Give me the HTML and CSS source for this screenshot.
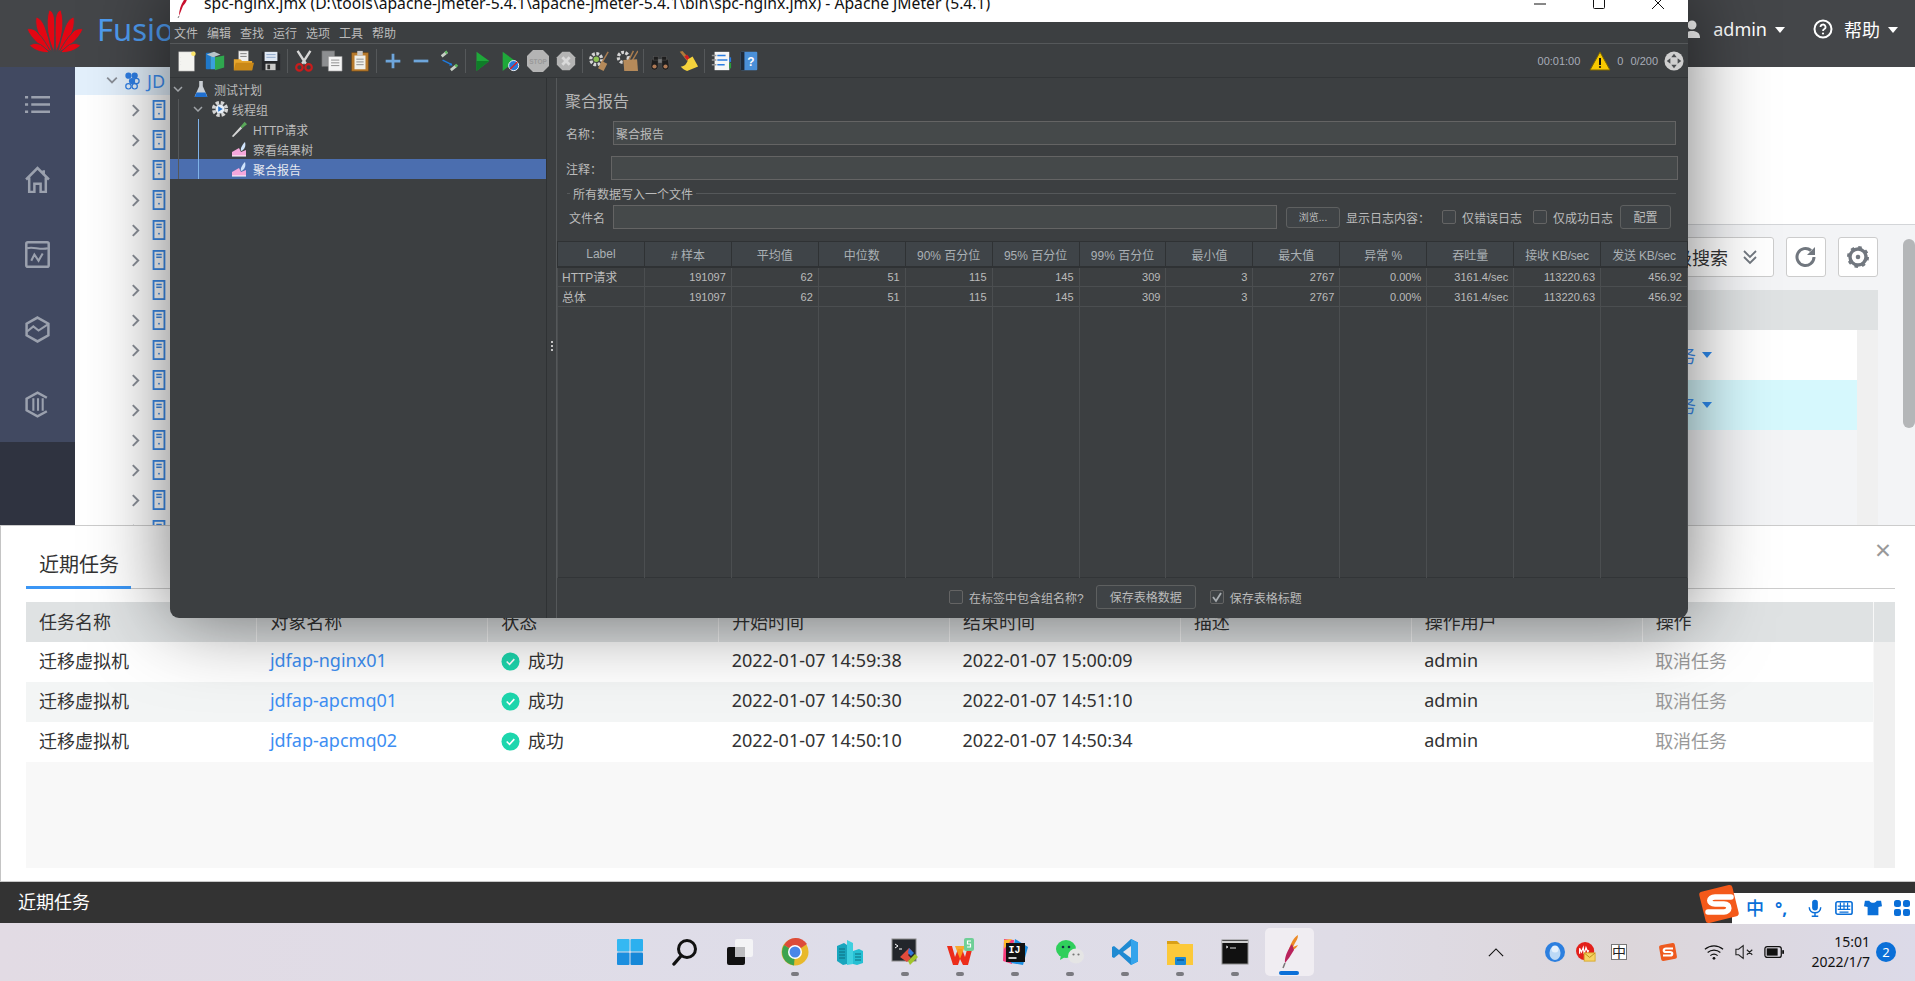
FILE: index.html
```html
<!DOCTYPE html>
<html lang="zh-CN">
<head>
<meta charset="utf-8">
<title>spc-nginx.jmx - Apache JMeter (5.4.1)</title>
<link rel="stylesheet" href="styles.css">
</head>
<body>
<svg class="defs" aria-hidden="true">
  <symbol id="chev" viewBox="0 0 10 16"><path d="M2 2l6 6-6 6" fill="none" stroke="#8a8f98" stroke-width="2.2"/></symbol>
  <symbol id="srv" viewBox="0 0 14 22"><rect x="1" y="1" width="12" height="20" fill="#fff" stroke="#3b8bea" stroke-width="2"/><path d="M4 5h6M4 8h6" stroke="#3b8bea" stroke-width="1.6"/><circle cx="7" cy="15" r="1" fill="#3b8bea"/></symbol>
  <symbol id="ok" viewBox="0 0 20 20"><circle cx="10" cy="10" r="9.5" fill="#1dd6ad"/><path d="M6 10l3 3 5-5.500" fill="none" stroke="#fff" stroke-width="1.700"/></symbol>
  <symbol id="graph" viewBox="0 0 16 16"><path d="M1 15V11L8 7l2 4 5-2v6z" fill="#f5a8dc"/><path d="M1 15h14" stroke="#fff"/><path d="M10 10c-1-3 2-7 4-9 1 3 0 8-4 9z" fill="#cfe3fb"/></symbol>
</svg>

<div class="app">
  <header class="topbar">
    <svg class="hw-logo" viewBox="0 0 60 46"><g fill="#e30613" stroke="#444649" stroke-width=".9"><path d="M29 45C23 33 20 16 24 3c3 .5 5 4 5.500 9 .6 11 .5 22-.5 33z"/><path d="M31 45c6-12 9-29 5-42-3 .5-5 4-5.500 9-.6 11-.5 22 .5 33z"/><path d="M27 45C17 36 9 23 11 10c4 1 7 5 9 10 3 8 5 16 7 25z"/><path d="M33 45c10-9 18-22 16-35-4 1-7 5-9 10-3 8-5 16-7 25z"/><path d="M26 45C17 41 6 32 2 22c4-1 8 0 11 4 5 5 9 12 13 19z"/><path d="M34 45c9-4 20-13 24-23-4-1-8 0-11 4-5 5-9 12-13 19z"/><path d="M24.500 45.500c-8 .5-15-2-20-7 3-2.500 7-2.500 11-1 3 2 6 5 9 8z"/><path d="M35.500 45.500c8 .5 15-2 20-7-3-2.500-7-2.500-11-1-3 2-6 5-9 8z"/></g></svg>
    <span class="brand">Fusio</span>
    <div class="top-right">
      <svg class="user-ic" viewBox="0 0 16 18"><circle cx="8" cy="5" r="4.500" fill="#fff"/><path d="M0 18c0-5 3-7 8-7s8 2 8 7z" fill="#fff"/></svg>
      <span class="top-link">admin</span><i class="caret"></i>
      <svg class="help-ic" viewBox="0 0 20 20"><circle cx="10" cy="10" r="8.500" fill="none" stroke="#fff" stroke-width="2"/><path d="M7.500 8a2.500 2.500 0 1 1 3.500 2.300c-.7.400-1 .8-1 1.700" fill="none" stroke="#fff" stroke-width="1.800"/><circle cx="10" cy="14.500" r="1.100" fill="#fff"/></svg>
      <span class="top-link">帮助</span><i class="caret"></i>
    </div>
  </header>
  <div class="app-body">
    <nav class="sidenav">
      <div class="nav-item"><svg viewBox="0 0 24 20"><path d="M6 3h18M6 10h18M6 17h18M0 3h3M0 10h3M0 17h3" stroke="#9ba1ae" stroke-width="2.400"/></svg></div>
      <div class="nav-item"><svg viewBox="0 0 24 26"><path d="M1 13L12 2l11 11M4 11v14h5v-8h6v8h5V11M18 4v5" fill="none" stroke="#9ba1ae" stroke-width="2.400"/></svg></div>
      <div class="nav-item"><svg viewBox="0 0 24 26"><rect x="1.200" y="1.200" width="21.600" height="23.600" rx="1.500" fill="none" stroke="#9ba1ae" stroke-width="2.400"/><path d="M2 7c6-2 12 2 20 0M6 19l3-6 4 6 4-7" fill="none" stroke="#9ba1ae" stroke-width="2"/></svg></div>
      <div class="nav-item"><svg viewBox="0 0 24 26"><path d="M12 1.500L22.500 7.500v11L12 24.500 1.500 18.500v-11z" fill="none" stroke="#9ba1ae" stroke-width="2.400"/><path d="M2 15l6-5 5 4 9-6" fill="none" stroke="#9ba1ae" stroke-width="2"/></svg></div>
      <div class="nav-item"><svg viewBox="0 0 24 26"><path d="M21 6.500L12 1.500 1.500 7.500v11L12 24.500l9-5" fill="none" stroke="#9ba1ae" stroke-width="2.400"/><path d="M8 7v12M12.500 7v12M17 7v12" stroke="#9ba1ae" stroke-width="2"/></svg></div>
    </nav>
    <aside class="tree">
      <div class="tree-root"><svg class="chev-down" viewBox="0 0 14 10"><path d="M1 2l6 6 6-6" fill="none" stroke="#8a8f98" stroke-width="2.200"/></svg><svg class="cluster" viewBox="0 0 18 22"><g fill="#2f7fe6"><circle cx="5" cy="5" r="3.500"/><circle cx="12" cy="5" r="3.500"/><circle cx="9" cy="11" r="3.500"/></g><g fill="none" stroke="#2f7fe6" stroke-width="1.400"><circle cx="14" cy="11" r="3"/><circle cx="5" cy="17" r="3"/><circle cx="12" cy="17" r="3"/></g></svg><span class="tree-name">JD</span></div>
      <div class="tree-row"><svg class="chev"><use href="#chev"/></svg><svg class="srv"><use href="#srv"/></svg></div>
      <div class="tree-row"><svg class="chev"><use href="#chev"/></svg><svg class="srv"><use href="#srv"/></svg></div>
      <div class="tree-row"><svg class="chev"><use href="#chev"/></svg><svg class="srv"><use href="#srv"/></svg></div>
      <div class="tree-row"><svg class="chev"><use href="#chev"/></svg><svg class="srv"><use href="#srv"/></svg></div>
      <div class="tree-row"><svg class="chev"><use href="#chev"/></svg><svg class="srv"><use href="#srv"/></svg></div>
      <div class="tree-row"><svg class="chev"><use href="#chev"/></svg><svg class="srv"><use href="#srv"/></svg></div>
      <div class="tree-row"><svg class="chev"><use href="#chev"/></svg><svg class="srv"><use href="#srv"/></svg></div>
      <div class="tree-row"><svg class="chev"><use href="#chev"/></svg><svg class="srv"><use href="#srv"/></svg></div>
      <div class="tree-row"><svg class="chev"><use href="#chev"/></svg><svg class="srv"><use href="#srv"/></svg></div>
      <div class="tree-row"><svg class="chev"><use href="#chev"/></svg><svg class="srv"><use href="#srv"/></svg></div>
      <div class="tree-row"><svg class="chev"><use href="#chev"/></svg><svg class="srv"><use href="#srv"/></svg></div>
      <div class="tree-row"><svg class="chev"><use href="#chev"/></svg><svg class="srv"><use href="#srv"/></svg></div>
      <div class="tree-row"><svg class="chev"><use href="#chev"/></svg><svg class="srv"><use href="#srv"/></svg></div>
      <div class="tree-row"><svg class="chev"><use href="#chev"/></svg><svg class="srv"><use href="#srv"/></svg></div>
      <div class="tree-row"><svg class="chev"><use href="#chev"/></svg><svg class="srv"><use href="#srv"/></svg></div>
    </aside>
    <main class="main">
      <div class="main-head"></div>
      <div class="main-content">
        <div class="main-tools">
          <button class="adv-btn">高级搜索<svg viewBox="0 0 16 16"><path d="M2 2l6 6 6-6M2 8l6 6 6-6" fill="none" stroke="#71777f" stroke-width="1.800"/></svg></button>
          <button class="sq-btn"><svg viewBox="0 0 24 24"><path d="M20 12a8.500 8.500 0 1 1-3-6.500" fill="none" stroke="#71777f" stroke-width="3"/><path d="M21 2v8h-8z" fill="#71777f"/></svg></button>
          <button class="sq-btn"><svg viewBox="0 0 24 24"><circle cx="12" cy="12" r="8" fill="none" stroke="#71777f" stroke-width="3.400"/><circle cx="12" cy="12" r="10" fill="none" stroke="#71777f" stroke-width="2" stroke-dasharray="3.500 4.350"/><circle cx="12" cy="12" r="2.300" fill="#71777f"/></svg></button>
        </div>
        <div class="vm-head"></div>
        <div class="vm-body">
          <div class="vm-rows">
            <div class="vm-row"><span class="vm-link">任务</span><i class="vm-caret"></i></div>
            <div class="vm-row vm-sel"><span class="vm-link">任务</span><i class="vm-caret"></i></div>
          </div>
          <div class="vm-track"></div>
        </div>
      </div>
      <div class="page-scroll"></div>
    </main>
  </div>
</div>

<section class="task-panel">
  <div class="panel-tabs"><span class="panel-tab">近期任务</span><span class="panel-close">×</span></div>
  <div class="panel-table">
    <table class="tasks">
      <thead><tr><th>任务名称</th><th>对象名称</th><th>状态</th><th>开始时间</th><th>结束时间</th><th>描述</th><th>操作用户</th><th>操作</th></tr></thead>
      <tbody>
        <tr><td>迁移虚拟机</td><td><a class="t-link">jdfap-nginx01</a></td><td><span class="t-ok"><svg><use href="#ok"/></svg>成功</span></td><td>2022-01-07 14:59:38</td><td>2022-01-07 15:00:09</td><td></td><td>admin</td><td class="t-muted">取消任务</td></tr>
        <tr class="alt"><td>迁移虚拟机</td><td><a class="t-link">jdfap-apcmq01</a></td><td><span class="t-ok"><svg><use href="#ok"/></svg>成功</span></td><td>2022-01-07 14:50:30</td><td>2022-01-07 14:51:10</td><td></td><td>admin</td><td class="t-muted">取消任务</td></tr>
        <tr><td>迁移虚拟机</td><td><a class="t-link">jdfap-apcmq02</a></td><td><span class="t-ok"><svg><use href="#ok"/></svg>成功</span></td><td>2022-01-07 14:50:10</td><td>2022-01-07 14:50:34</td><td></td><td>admin</td><td class="t-muted">取消任务</td></tr>
      </tbody>
    </table>
    <div class="tasks-track"></div>
  </div>
</section>

<div class="dock-bar">近期任务</div>

<footer class="taskbar">
  <div class="tb-item"><svg viewBox="0 0 28 28"><g fill="#1d9be8"><rect x="1" y="1" width="12.500" height="12.500" rx="1" fill="#35b8f2"/><rect x="14.500" y="1" width="12.500" height="12.500" rx="1" fill="#2cb0ef"/><rect x="1" y="14.500" width="12.500" height="12.500" rx="1" fill="#1c8fdf"/><rect x="14.500" y="14.500" width="12.500" height="12.500" rx="1" fill="#1688d8"/></g></svg></div>
  <div class="tb-item"><svg viewBox="0 0 28 28"><circle cx="16" cy="11" r="8.500" fill="none" stroke="#111" stroke-width="3"/><path d="M10 18l-7 8" stroke="#111" stroke-width="3.400" stroke-linecap="round"/></svg></div>
  <div class="tb-item"><svg viewBox="0 0 28 28"><rect x="9" y="1" width="18" height="18" rx="2" fill="#f4f4f6"/><rect x="1" y="9" width="18" height="18" rx="2" fill="#111"/><rect x="9" y="9" width="10" height="10" fill="#bdbdc0"/></svg></div>
  <div class="tb-item dot"><svg viewBox="0 0 28 28"><circle cx="14" cy="14" r="13.500" fill="#e8b92b"/><path d="M14 14L3 7a13.500 13.500 0 0 1 23-1z" fill="#dd4b39"/><path d="M14 14L3 7a13.500 13.500 0 0 0 10 20.500z" fill="#3da34e"/><circle cx="14" cy="14" r="7" fill="#fff"/><circle cx="14" cy="14" r="5.500" fill="#4a86e8"/></svg></div>
  <div class="tb-item"><svg viewBox="0 0 28 28"><path d="M1 8l7-3 3 2v19l-4 1-6-4z" fill="#18a5bd"/><path d="M11 2l6 3v21l-6 1z" fill="#3fd0e0"/><path d="M17 13l6-2 4 2v12l-6 2-4-1z" fill="#25bfd3"/><path d="M3 11h6M3 14h6M3 17h6M3 20h6M19 16h6M19 19h6M19 22h6" stroke="#0c6e80" stroke-width="1"/></svg></div>
  <div class="tb-item dot"><svg viewBox="0 0 28 28"><rect x="1" y="1" width="24" height="22" fill="#23262b" stroke="#8b8b8b"/><path d="M4 6l3 2-3 2M8 11h3" stroke="#fff" fill="none"/><path d="M9 19l9-9 3 3-4 4 3 3-4 4z" fill="#e14b3b"/><path d="M18 10l5 5-3 3-3-3z" fill="#3077d8"/><path d="M17 23l7-7 3 3-8 8z" fill="#a2c52c"/></svg></div>
  <div class="tb-item dot"><svg viewBox="0 0 28 28"><path d="M1 8l6 19h5l2-6 3 6h5l5-19h-5l-3 11-3-8h-4l-3 8L6 8z" fill="#ec2c1a"/><path d="M9 8h10l-5 13z" fill="#f9a21b" opacity=".9"/><rect x="18" y="0" width="10" height="13" rx="2" fill="#6fcf97"/><path d="M25 3h-3.500v3h3v3H21" fill="none" stroke="#fff" stroke-width="1.200"/></svg></div>
  <div class="tb-item dot"><svg viewBox="0 0 28 28"><path d="M3 1l10 1-2 24-9-3z" fill="#f63d7c"/><path d="M14 1l13 8-5 18-12-2z" fill="#1d8fe1"/><path d="M3 2l8-1-8 10z" fill="#fdb92c"/><rect x="5" y="5" width="19" height="19" fill="#111"/><text class="ij" x="7.500" y="15">IJ</text><path d="M7.500 20h8" stroke="#fff" stroke-width="1.600"/></svg></div>
  <div class="tb-item dot"><svg viewBox="0 0 28 28"><ellipse cx="10" cy="11" rx="10" ry="9" fill="#30cf5c"/><path d="M5 17l-1 5 5-3z" fill="#30cf5c"/><circle cx="7" cy="9" r="1.300" fill="#134"/><circle cx="13" cy="9" r="1.300" fill="#134"/><ellipse cx="20" cy="18" rx="8" ry="7.500" fill="#e5e5e5"/><circle cx="17.500" cy="16.500" r="1.100" fill="#777"/><circle cx="22.500" cy="16.500" r="1.100" fill="#777"/></svg></div>
  <div class="tb-item dot"><svg viewBox="0 0 28 28"><path d="M20 1l7 3.500v19L20 27 8 16l-5 4-2-1V9l2-1 5 4z" fill="#1f8ad2"/><path d="M20 8v12l-8-6z" fill="#e4e4ea"/><path d="M20 1l7 3.500v19L20 27z" fill="#34a4ec"/></svg></div>
  <div class="tb-item dot"><svg viewBox="0 0 28 28"><path d="M1 3h10l3 3H1z" fill="#d9a017"/><path d="M1 6h26v21H1z" fill="#fcc93a"/><rect x="9" y="19" width="11" height="8" rx="1" fill="#1a88d5"/><path d="M11 22h7" stroke="#0b4f82" stroke-width="1.200"/></svg></div>
  <div class="tb-item dot"><svg viewBox="0 0 28 28"><rect x="1" y="2" width="26" height="24" fill="#111" stroke="#8b8b8b"/><path d="M1 4h26" stroke="#cfcfcf" stroke-width="2"/><path d="M5 8l2 1-2 1M9 10h6" stroke="#ddd" fill="none"/></svg></div>
  <div class="tb-item active"><svg viewBox="0 0 28 34"><path d="M22 0c0 4-2 6-3 8l-2 4 5-2c-1 2-3 4-5 5l-3 3-3 4 2-8c2-6 5-12 9-14z" fill="#ec8a26"/><path d="M16 9l2 6-5 8-4 5c-1-5 3-14 7-19z" fill="#b9225c"/><path d="M9 28l-2 5" stroke="#777" stroke-width="1.500"/></svg></div>
  <div class="tray">
    <svg class="tr-chev" viewBox="0 0 18 10"><path d="M1 9l8-8 8 8" fill="none" stroke="#111" stroke-width="1.300"/></svg>
    <svg class="tr-ic tr-qq" viewBox="0 0 20 20"><circle cx="10" cy="10" r="10" fill="#2c7fdf"/><ellipse cx="10" cy="11" rx="5.500" ry="7" fill="#bcd9f6"/><circle cx="10" cy="7" r="3.500" fill="#e6f1fc"/></svg>
    <svg class="tr-ic tr-mail" viewBox="0 0 22 22"><circle cx="10" cy="10" r="10" fill="#e3201b"/><path d="M4 13V7l2 4 2-5 1 7 2-7 2 5 1-2" fill="none" stroke="#fff" stroke-width="1.300"/><rect x="9" y="12" width="12" height="9" fill="#f6d365" stroke="#d9a92a"/><path d="M9 12l6 5 6-5" fill="none" stroke="#b68b15"/></svg>
    <span class="tr-zh">中</span>
    <svg class="tr-ic tr-s" viewBox="0 0 20 20"><rect x="2" y="2" width="16" height="16" rx="2" fill="#ee5a1f" transform="rotate(-10 10 10)"/><path d="M15 6.500H8c-3 0-3 3.500 0 3.500h4c3 0 3 3.500 0 3.500H5" fill="none" stroke="#fff" stroke-width="2.200"/></svg>
    <svg class="tr-ic tr-wifi" viewBox="0 0 22 18"><g fill="none" stroke="#111" stroke-width="1.300"><path d="M1 6c6-5 14-5 20 0M4 9.500c4-3.500 10-3.500 14 0M7 13c2.500-2 5.500-2 8 0"/></g><circle cx="11" cy="16" r="1.500" fill="#111"/></svg>
    <svg class="tr-ic tr-spk" viewBox="0 0 22 18"><path d="M1 6h3l5-4v14l-5-4H1zM13 6.500l6 5.500M19 6.500L13 12" fill="none" stroke="#222" stroke-width="1.200"/></svg>
    <svg class="tr-ic tr-bat" viewBox="0 0 22 14"><rect x="1" y="1" width="18" height="12" rx="2.500" fill="none" stroke="#111" stroke-width="1.400"/><rect x="3" y="3" width="12" height="8" fill="#111"/><rect x="20" y="5" width="2" height="4" fill="#111"/></svg>
    <div class="clock"><span>15:01</span><span>2022/1/7</span></div>
    <span class="badge">2</span>
  </div>
</footer>

<div class="ime">
  <svg class="ime-s" viewBox="0 0 42 40"><rect x="4" y="4" width="34" height="32" rx="3" fill="#f4591a" transform="rotate(-14 21 20)"/><path d="M33 13H17c-7 0-7 7 0 7h9c7 0 6 8 0 8H10" fill="none" stroke="#fff" stroke-width="5.500" stroke-linecap="round"/></svg>
  <div class="ime-bar">
    <span class="ime-zh">中</span>
    <span class="ime-punc">°,</span>
    <svg viewBox="0 0 18 22"><rect x="5.500" y="1" width="7" height="13" rx="3.500" fill="#0a6fd8"/><path d="M2 10c0 9 14 9 14 0M9 17v4M5 21h8" fill="none" stroke="#0a6fd8" stroke-width="1.800"/></svg>
    <svg viewBox="0 0 20 18"><rect x="1" y="2" width="18" height="14" rx="2" fill="none" stroke="#0a6fd8" stroke-width="1.800"/><path d="M3 7h14M3 10.500h14M5 13.500h10M6 3v8M10 3v8M14 3v8" stroke="#0a6fd8" stroke-width="1.300"/></svg>
    <svg viewBox="0 0 20 18"><path d="M6 1H1L0 7l4 1v9h12V8l4-1-1-6h-5c-1 3-7 3-8 0z" fill="#0a6fd8"/></svg>
    <svg viewBox="0 0 18 18"><rect x="1" y="1" width="7" height="7" rx="2.500" fill="#0a6fd8"/><rect x="10" y="1" width="7" height="7" rx="2.500" fill="#0a6fd8"/><rect x="1" y="10" width="7" height="7" rx="2" fill="#0a6fd8"/><rect x="10" y="10" width="7" height="7" rx="2" fill="#0a6fd8"/></svg>
  </div>
</div>

<div class="jm-window">
  <div class="jm-title">
    <svg class="jm-feather" viewBox="0 0 12 22"><path d="M11 0C10 5 8 8 6 10l-4 10C2 13 5 4 11 0z" fill="#c8102e"/><path d="M2 20l-1 2" stroke="#777"/></svg>
    <span class="jm-title-text">spc-nginx.jmx (D:\tools\apache-jmeter-5.4.1\apache-jmeter-5.4.1\bin\spc-nginx.jmx) - Apache JMeter (5.4.1)</span>
    <div class="jm-controls">
      <svg viewBox="0 0 12 12"><path d="M0 7h12" stroke="#111"/></svg>
      <svg viewBox="0 0 12 12"><rect x=".5" y=".5" width="11" height="11" rx="1" fill="none" stroke="#111"/></svg>
      <svg viewBox="0 0 12 12"><path d="M0 0l12 12M12 0L0 12" stroke="#111"/></svg>
    </div>
  </div>
  <div class="jm-menu"><span>文件</span><span>编辑</span><span>查找</span><span>运行</span><span>选项</span><span>工具</span><span>帮助</span></div>
  <div class="jm-toolbar">
    <svg class="ti" viewBox="0 0 24 24"><rect x="3" y="2" width="17" height="21" fill="#f4f4f0" stroke="#999" stroke-width=".6"/><circle cx="19" cy="4" r="2.500" fill="#fce56a"/><path d="M5 8v.1M5 12v.1M5 16v.1" stroke="#888"/></svg>
    <svg class="ti" viewBox="0 0 24 24"><rect x="2" y="3" width="5" height="18" rx="1" fill="#1f78c8"/><rect x="7" y="3" width="5" height="18" fill="#3aa0dc"/><path d="M12 8l10-2v13l-10 3z" fill="#2fa84f"/><path d="M3 5l8-3 7 3-8 3z" fill="#b9c4c9"/></svg>
    <svg class="ti" viewBox="0 0 24 24"><rect x="7" y="1" width="11" height="13" fill="#eee" stroke="#777" stroke-width=".6"/><path d="M9 4h7M9 7h7" stroke="#777"/><path d="M2 10h7l2 2h11v10H2z" fill="#e7a62d"/><path d="M2 22l2-8h20l-2 8z" fill="#c98817"/></svg>
    <svg class="ti" viewBox="0 0 24 24"><path d="M2 2h17l3 3v17H2z" fill="#26282c"/><rect x="5" y="2" width="14" height="10" fill="#dfe8f4"/><path d="M7 5h10M7 8h10" stroke="#8aa4c8"/><rect x="6" y="15" width="11" height="7" fill="#c9c9c9"/><rect x="8" y="16" width="3" height="5" fill="#333"/></svg>
    <i class="tsep"></i>
    <svg class="ti" viewBox="0 0 24 24"><path d="M5 1l9 14M19 1L10 15" stroke="#d7d7d7" stroke-width="2.600"/><g fill="none" stroke="#c81c1c" stroke-width="2.400"><circle cx="7" cy="19" r="3.500"/><circle cx="17" cy="19" r="3.500"/></g></svg>
    <svg class="ti" viewBox="0 0 24 24"><rect x="1" y="1" width="14" height="17" fill="#8d8f91" stroke="#666" stroke-width=".6"/><path d="M8 7h15v16H8z" fill="#f4f4f4" stroke="#888" stroke-width=".6"/><path d="M11 11h9M11 14h9M11 17h9" stroke="#888"/></svg>
    <svg class="ti" viewBox="0 0 24 24"><rect x="3" y="3" width="18" height="20" fill="#b87a2c" stroke="#7a4d14" stroke-width=".6"/><rect x="6" y="6" width="12" height="15" fill="#f0f0ea"/><rect x="9" y="1" width="6" height="5" fill="#c9c9c9"/><path d="M8 10h8M8 13h8M8 16h8" stroke="#888"/></svg>
    <i class="tsep"></i>
    <svg class="ti" viewBox="0 0 24 24"><path d="M12 4v16M4 12h16" stroke="#6ea6dc" stroke-width="3"/></svg>
    <svg class="ti" viewBox="0 0 24 24"><path d="M4 12h16" stroke="#6ea6dc" stroke-width="3"/></svg>
    <svg class="ti" viewBox="0 0 24 24"><path d="M4 7l6-5" stroke="#c7cfc5" stroke-width="3"/><path d="M8 3l2-1" stroke="#5cb85c" stroke-width="3"/><path d="M14 22l6-5" stroke="#c7cfc5" stroke-width="3"/><path d="M19 18l2-2" stroke="#5cb85c" stroke-width="3"/><path d="M5 11l10 5" stroke="#1e7be0" stroke-width="1.500"/><path d="M16 17l-4 0 2-3z" fill="#1e7be0"/></svg>
    <i class="tsep"></i>
    <svg class="ti" viewBox="0 0 24 24"><path d="M6 2l14 10L6 23z" fill="#1fa83a"/><path d="M6 12h14L6 23z" fill="#0f7d28"/></svg>
    <svg class="ti" viewBox="0 0 24 24"><path d="M4 2l14 10L4 23z" fill="#1fa83a"/><circle cx="16" cy="17" r="5.500" fill="#2878d8" stroke="#fff"/><path d="M12 21l8-8" stroke="#e0201c" stroke-width="1.500"/></svg>
    <svg class="ti ti-big" viewBox="0 0 24 24"><path d="M7 1h10l6 6v10l-6 6H7l-6-6V7z" fill="#b4b4b4"/><text class="stop-t" x="12" y="14.500">STOP</text></svg>
    <svg class="ti" viewBox="0 0 24 24"><path d="M8 2h8l6 6v8l-6 6H8l-6-6V8z" fill="#b4b4b4"/><path d="M8 8l8 8M16 8l-8 8" stroke="#d9d9d9" stroke-width="3"/></svg>
    <i class="tsep"></i>
    <svg class="ti" viewBox="0 0 24 24"><circle cx="9" cy="10" r="6" fill="none" stroke="#d5d5d5" stroke-width="3.500" stroke-dasharray="3 1.600"/><circle cx="9" cy="10" r="3" fill="#8cc152"/><path d="M22 2l-7 12" stroke="#a87c4f" stroke-width="1.600"/><path d="M15 12l6 3-4 8-6-3z" fill="#b58a5a"/></svg>
    <svg class="ti" viewBox="0 0 24 24"><circle cx="8" cy="8" r="5.500" fill="none" stroke="#d5d5d5" stroke-width="3.500" stroke-dasharray="3 1.600"/><path d="M24 1l-6 10M19 1l-5 10" stroke="#a87c4f" stroke-width="1.600"/><path d="M8 11l15-1 1 13H9z" fill="#b58a5a"/></svg>
    <i class="tsep"></i>
    <svg class="ti" viewBox="0 0 24 24"><g fill="#1d1d1d" stroke="#555" stroke-width=".6"><path d="M3 10h7v8a4 4 0 0 1-8 0z"/><path d="M14 10h7l1 8a4 4 0 0 1-8 0z"/><rect x="5" y="7" width="5" height="4"/><rect x="14" y="7" width="5" height="4"/></g><rect x="10" y="10" width="4" height="4" fill="#777"/><circle cx="6" cy="18" r="2.300" fill="#b07a55"/><circle cx="18" cy="18" r="2.300" fill="#b07a55"/></svg>
    <svg class="ti" viewBox="0 0 24 24"><path d="M3 2l3-1 8 9-3 2z" fill="#b07a3a"/><path d="M8 7l3-2 3 4-3 2z" fill="#d21f1f"/><path d="M12 10l5-3 6 11-12 5c-2-1-6-3-7-5 4 0 7-3 8-8z" fill="#f4d23c"/></svg>
    <i class="tsep"></i>
    <svg class="ti" viewBox="0 0 24 24"><rect x="5" y="2" width="16" height="20" fill="#f6f6f6"/><path d="M8 6h9M8 11h11M8 16h8" stroke="#2a7de1" stroke-width="1.600"/><path d="M2 6h5M2 11h5M2 16h5" stroke="#999" stroke-width="1.600"/><rect x="21" y="8" width="2" height="5" fill="#2a7de1"/><rect x="21" y="14" width="2" height="6" fill="#2a9d3b"/></svg>
    <svg class="ti" viewBox="0 0 24 24"><rect x="3" y="2" width="18" height="20" rx="1" fill="#4a90d9"/><rect x="3" y="2" width="4" height="20" fill="#1f2a38"/><text class="help-q" x="14" y="17">?</text></svg>
    <div class="jm-status">
      <span class="st-time">00:01:00</span>
      <svg class="st-warn" viewBox="0 0 22 20"><path d="M11 1l10 18H1z" fill="#f7c800" stroke="#7a6400"/><path d="M11 7v7" stroke="#111" stroke-width="2"/><circle cx="11" cy="16" r="1.100" fill="#111"/></svg>
      <span class="st-err">0</span>
      <span class="st-thr">0/200</span>
      <svg class="st-globe" viewBox="0 0 22 22"><circle cx="11" cy="11" r="10.500" fill="#cfcfcf"/><path d="M11 3l3 4H8zM11 19l3-4H8zM3 11l4-3v6zM19 11l-4-3v6z" fill="#4a4d50"/></svg>
    </div>
  </div>
  <div class="jm-split">
    <div class="jm-tree">
      <div class="jt-line jt-line1"></div>
      <div class="jt-line jt-line2"></div>
      <div class="jt-row lv0"><svg class="jt-exp" viewBox="0 0 10 6"><path d="M1 1l4 4 4-4" fill="none" stroke="#a0a4a8" stroke-width="1.500"/></svg><svg class="jt-ic" viewBox="0 0 16 20"><path d="M6 1h4v6l5 11a1 1 0 0 1-1 1H2a1 1 0 0 1-1-1l5-11z" fill="#c9ced3"/><path d="M3 14h10l2 5H1z" fill="#1f6fd0"/></svg><span>测试计划</span></div>
      <div class="jt-row lv1"><svg class="jt-exp" viewBox="0 0 10 6"><path d="M1 1l4 4 4-4" fill="none" stroke="#a0a4a8" stroke-width="1.500"/></svg><svg class="jt-ic" viewBox="0 0 20 20"><circle cx="10" cy="10" r="7" fill="none" stroke="#d5d5d5" stroke-width="4" stroke-dasharray="3.500 2"/><circle cx="10" cy="10" r="5" fill="#e7eef6"/><path d="M8 7l5 3-5 3z" fill="#2e75c9"/></svg><span>线程组</span></div>
      <div class="jt-row lv2"><svg class="jt-ic" viewBox="0 0 20 20"><path d="M1 19L12 7l2 2L3 20z" fill="#d5d5d5"/><path d="M12 7l5-6 3 3-6 5z" fill="#5aa85a"/></svg><span>HTTP请求</span></div>
      <div class="jt-row lv2"><svg class="jt-ic"><use href="#graph"/></svg><span>察看结果树</span></div>
      <div class="jt-row lv2 sel"><svg class="jt-ic"><use href="#graph"/></svg><span>聚合报告</span></div>
    </div>
    <div class="jm-pane">
      <i class="grip"></i>
      <h2 class="jp-title">聚合报告</h2>
      <div class="jp-row jp-name"><label>名称：</label><div class="field">聚合报告</div></div>
      <div class="jp-row jp-comment"><label>注释：</label><div class="field"></div></div>
      <div class="jp-legend"><i class="lg-s"></i><span>所有数据写入一个文件</span><i class="lg-l"></i></div>
      <div class="jp-row jp-file">
        <label class="f-label">文件名</label>
        <div class="field f-field"></div>
        <button class="jbtn f-browse">浏览...</button>
        <span class="f-show">显示日志内容：</span>
        <i class="cb f-cb1"></i><span class="f-l">仅错误日志</span>
        <i class="cb f-cb2"></i><span class="f-l">仅成功日志</span>
        <button class="jbtn f-conf">配置</button>
      </div>
      <table class="agg">
        <thead><tr><th>Label</th><th># 样本</th><th>平均值</th><th>中位数</th><th>90% 百分位</th><th>95% 百分位</th><th>99% 百分位</th><th>最小值</th><th>最大值</th><th>异常 %</th><th>吞吐量</th><th>接收 KB/sec</th><th>发送 KB/sec</th></tr></thead>
        <tbody>
          <tr><td>HTTP请求</td><td>191097</td><td>62</td><td>51</td><td>115</td><td>145</td><td>309</td><td>3</td><td>2767</td><td>0.00%</td><td>3161.4/sec</td><td>113220.63</td><td>456.92</td></tr>
          <tr><td>总体</td><td>191097</td><td>62</td><td>51</td><td>115</td><td>145</td><td>309</td><td>3</td><td>2767</td><td>0.00%</td><td>3161.4/sec</td><td>113220.63</td><td>456.92</td></tr>
          <tr class="agg-fill"><td></td><td></td><td></td><td></td><td></td><td></td><td></td><td></td><td></td><td></td><td></td><td></td><td></td></tr>
        </tbody>
      </table>
      <div class="jp-foot">
        <i class="cb"></i><span>在标签中包含组名称?</span>
        <button class="jbtn foot-btn">保存表格数据</button>
        <i class="cb cb-on"><svg viewBox="0 0 12 12"><path d="M2 6l3 4 5-8" fill="none" stroke="#a9adb1" stroke-width="1.800"/></svg></i><span>保存表格标题</span>
      </div>
    </div>
  </div>
</div>
</body>
</html>
```

FILE: styles.css
```css
* { box-sizing: border-box; }
html, body { margin: 0; height: 100%; }
body {
  position: relative;
  width: 1915px;
  height: 981px;
  overflow: hidden;
  font-family: "Noto Sans", "Noto Sans CJK SC", sans-serif;
  color: #333;
  background: #fff;
}
.defs { position: absolute; width: 0; height: 0; }
button { font-family: inherit; padding: 0; }

/* background web app */
.app { height: 882px; display: flex; flex-direction: column; }
.topbar {
  height: 67px;
  background: #444649;
  display: flex;
  align-items: center;
  color: #fff;
  overflow: hidden;
}
.hw-logo { width: 60px; height: 46px; margin: -8px 0 0 25px; flex: none; }
.brand { font-size: 31px; color: #4f9cf0; margin: -10px 0 0 12px; white-space: nowrap; }
.top-right { margin-left: auto; display: flex; align-items: center; margin-top: -9px; padding-right: 17px; }
.user-ic { width: 16px; height: 18px; margin-right: 13px; }
.top-link { font-size: 18px; }
.caret { width: 0; height: 0; border: 5px solid transparent; border-top: 6px solid #fff; border-bottom: 0; margin-left: 8px; margin-top: 2px; }
.help-ic { width: 20px; height: 20px; margin: 0 11px 0 28px; }
.app-body { flex: 1; display: flex; min-height: 0; }
.sidenav {
  width: 75px;
  flex: none;
  background: linear-gradient(#414961 375px, #2f3340 375px);
}
.nav-item { height: 75px; display: flex; align-items: center; justify-content: center; }
.nav-item svg { width: 25px; height: 27px; }
.tree { width: 95px; flex: none; background: #fff; overflow: hidden; }
.tree-root { height: 28px; background: #e3f0fc; display: flex; align-items: center; padding-left: 31px; }
.chev-down { width: 12px; height: 8px; margin-top: -3px; flex: none; }
.cluster { width: 16px; height: 20px; margin-left: 6px; flex: none; }
.tree-name { font-size: 18px; color: #3d8ef2; margin-left: 7px; }
.tree-row { height: 30px; display: flex; align-items: center; padding-left: 56px; }
.chev { width: 9px; height: 15px; flex: none; }
.srv { width: 14px; height: 20px; margin-left: 12px; flex: none; }
.main { flex: 1; position: relative; min-width: 0; display: flex; flex-direction: column; background: #f3f4f6; }
.main-head { height: 158px; flex: none; background: #fff; border-bottom: 1px solid #d3d5d8; }
.main-content { flex: 1; padding: 12px 37px 0 0; display: flex; flex-direction: column; }
.main-tools { display: flex; justify-content: flex-end; gap: 12px; }
.adv-btn, .sq-btn { height: 40px; background: #fff; border: 1px solid #ccc; border-radius: 3px; display: flex; align-items: center; justify-content: center; }
.adv-btn { width: 120px; font-size: 18px; color: #333; gap: 14px; justify-content: flex-end; padding-right: 15px; }
.adv-btn svg { width: 16px; height: 16px; }
.sq-btn { width: 40px; }
.sq-btn svg { width: 24px; height: 24px; }
.vm-head { height: 40px; margin-top: 13px; background: #dfe2e3; }
.vm-body { display: flex; flex: 1; }
.vm-rows { flex: 1; }
.vm-track { width: 21px; background: #f0f0f0; }
.vm-row { height: 50px; background: #fff; display: flex; align-items: center; justify-content: flex-end; padding-right: 145px; gap: 6px; }
.vm-sel { background: #d6f8fd; }
.vm-link { font-size: 18px; color: #3d8ef2; }
.vm-caret { width: 0; height: 0; border: 5px solid transparent; border-top: 6px solid #2e8bf0; border-bottom: 0; }
.page-scroll { position: absolute; right: 0; top: 172px; width: 12px; height: 189px; border-radius: 6px; background: #b4b6b8; }

/* recent task drawer */
.task-panel {
  position: absolute;
  left: 0;
  top: 525px;
  width: 1915px;
  height: 357px;
  background: #fff;
  border-top: 1px solid #ccc;
  border-left: 1px solid #c4c4c4;
  border-bottom: 1px solid #c8c8c8;
  padding: 0 20px 0 25px;
}
.panel-tabs { height: 63px; border-bottom: 1px solid #ccc; display: flex; align-items: flex-end; justify-content: space-between; }
.panel-tab { font-size: 20px; line-height: 28px; width: 105px; height: 44px; padding: 6px 0 0 13px; border-bottom: 3px solid #3b96f5; margin-bottom: -1px; color: #333; }
.panel-close { font-size: 28px; line-height: 26px; color: #999; align-self: flex-start; margin: 10px 4px 0 0; }
.panel-table { position: relative; margin-top: 13px; height: 266px; background: #f8f8f8; }
.tasks { width: 1847px; border-collapse: collapse; table-layout: fixed; font-size: 18px; position: relative; }
.tasks th { height: 40px; background: #dfe2e3; font-weight: 400; text-align: left; padding: 0 0 2px 13px; border-right: 1px solid #f5f5f5; }
.tasks th:last-child { border-right: 0; }
.tasks td { height: 40px; padding: 0 0 4px 13px; background: #fff; white-space: nowrap; }
.tasks .alt td { background: #f3f5f5; }
.t-link { color: #3d8ef2; }
.t-ok { display: flex; align-items: center; gap: 8px; }
.t-ok svg { width: 19px; height: 19px; margin-top: 2px; }
.t-muted { color: #999; }
.tasks-track { position: absolute; right: 0; top: 0; width: 21px; height: 100%; background: #f0f0f0; }
.tasks-track::before { content: ""; display: block; height: 40px; background: #dfe2e3; }

.dock-bar { position: absolute; left: 0; top: 882px; width: 1915px; height: 41px; background: #333; color: #fff; font-size: 18px; line-height: 41px; padding-left: 18px; }

/* windows taskbar */
.taskbar {
  position: absolute;
  left: 0;
  top: 923px;
  width: 1915px;
  height: 58px;
  display: flex;
  align-items: center;
  padding-left: 602px;
  background: linear-gradient(90deg, #e2dbe4 0%, #dedde9 45%, #dfdce6 70%, #dcd6da 85%, #dcdae8 100%);
}
.tb-item { width: 55px; height: 48px; position: relative; display: flex; align-items: center; justify-content: center; }
.tb-item svg { width: 28px; height: 28px; }
.tb-item.dot::after { content: ""; position: absolute; left: 24px; top: 44px; width: 8px; height: 4px; border-radius: 2px; background: #7a7a80; }
.tb-item.active { background: #f0edf2; border-radius: 5px; width: 49px; margin-left: 3px; }
.tb-item.active svg { height: 34px; }
.tb-item.active::after { content: ""; position: absolute; left: 14px; top: 43px; width: 20px; height: 4px; border-radius: 2px; background: #0a6fd8; }
.ij { font: 700 10px "Liberation Mono", monospace; fill: #fff; }
.tray { margin-left: auto; display: flex; align-items: center; padding-right: 19px; }
.tr-chev { width: 16px; height: 9px; margin-right: 41px; }
.tr-ic { width: 20px; height: 20px; }
.tr-mail { margin-left: 11px; }
.tr-zh { width: 16px; height: 16px; margin-left: 15px; font-size: 14px; line-height: 14px; text-align: center; border: 1px solid #777; color: #222; background: #fff; }
.tr-s { margin-left: 31px; }
.tr-wifi { margin-left: 26px; }
.tr-spk { margin-left: 11px; }
.tr-bat { margin-left: 9px; }
.clock { width: 86px; display: flex; flex-direction: column; align-items: flex-end; font-size: 14px; line-height: 20px; color: #111; }
.badge { width: 20px; height: 20px; margin-left: 6px; border-radius: 50%; background: #0a6fd8; color: #fff; font-size: 13px; line-height: 20px; text-align: center; }

/* sogou IME bar */
.ime { position: absolute; left: 1698px; top: 884px; display: flex; align-items: center; z-index: 3; }
.ime-s { width: 42px; height: 40px; position: relative; z-index: 1; }
.ime-bar { width: 185px; height: 31px; margin-left: -8px; margin-top: 8px; padding-left: 14px; background: #fff; display: flex; align-items: center; gap: 11px; color: #0a6fd8; }
.ime-bar svg { width: 18px; height: 18px; flex: none; }
.ime-zh { font-size: 18px; line-height: 1; font-weight: 500; }
.ime-punc { font-size: 17px; font-weight: 700; width: 18px; margin-right: 2px; line-height: 1; }

/* JMeter window */
.jm-window {
  position: absolute;
  left: 170px;
  top: -10px;
  width: 1518px;
  height: 628px;
  background: #3c3f41;
  border-radius: 0 0 9px 9px;
  box-shadow: 0 0 80px rgba(0, 0, 0, .55);
  color: #bbb;
  font-family: "Liberation Sans", "Noto Sans CJK SC", sans-serif;
  font-size: 12px;
  overflow: hidden;
  z-index: 2;
}
.jm-title { height: 32px; background: #fff; color: #111; display: flex; align-items: center; padding: 0 0 6px 7px; }
.jm-feather { width: 12px; height: 22px; flex: none; margin-top: 8px; }
.jm-title-text { margin-left: 15px; font-family: "Noto Sans", sans-serif; font-size: 15.7px; white-space: nowrap; }
.jm-controls { margin-left: auto; display: flex; gap: 47px; padding-right: 24px; }
.jm-controls svg { width: 12px; height: 12px; }
.jm-menu { height: 22px; display: flex; align-items: center; gap: 9px; padding-left: 4px; border-bottom: 1px solid #55585a; }
.jm-menu span { font-family: "Noto Sans CJK SC", sans-serif; line-height: 16px; }
.jm-toolbar { height: 34px; display: flex; align-items: center; padding-left: 3px; border-bottom: 1px solid #323537; }
.ti { width: 22px; height: 22px; margin: 0 3px; flex: none; }
.ti-big { width: 24px; height: 24px; margin: 0 2px; }
.stop-t { font: 700 6.500px "Liberation Sans", sans-serif; fill: #999; text-anchor: middle; }
.help-q { font: 700 13px "Liberation Sans", sans-serif; fill: #fff; text-anchor: middle; }
.tsep { width: 1px; height: 24px; margin: 0 2px; background: #55585a; flex: none; }
.jm-status { margin-left: auto; display: flex; align-items: center; padding-right: 4px; color: #a8acb8; font-size: 11px; }
.st-time { margin-right: 9px; }
.st-warn { width: 22px; height: 20px; margin-right: 6px; }
.st-err { margin-right: 7px; }
.st-thr { margin-right: 6px; }
.st-globe { width: 20px; height: 20px; }
.jm-split { display: flex; height: 540px; }
.jm-tree { position: relative; width: 377px; flex: none; padding-top: 1px; border-right: 1px solid #2f3234; }
.jt-line { position: absolute; width: 1px; }
.jt-line1 { left: 8px; top: 21px; height: 80px; background: #55585a; z-index: 1; }
.jt-line2 { left: 28px; top: 41px; height: 60px; background: #7fb2e8; z-index: 1; }
.jt-row { height: 20px; display: flex; align-items: center; white-space: nowrap; position: relative; }
.jt-row span { margin-left: 5px; }
.jt-ic { width: 16px; height: 18px; flex: none; }
.jt-exp { width: 10px; height: 6px; margin-right: 10px; }
.lv0 { padding-left: 3px; }
.lv1 { padding-left: 23px; }
.lv2 { padding-left: 61px; }
.lv0 .jt-ic { margin-left: 0; }
.lv1 .jt-ic { margin-left: -2px; width: 18px; }
.lv1 span { margin-left: 3px; }
.lv2 span { margin-left: 6px; }
.sel { background: #4b6eaf; color: #e6e9ef; }
.jm-pane { position: relative; flex: 1; min-width: 0; margin-left: 9px; border-left: 1px solid #55585a; }
.grip { position: absolute; left: -6px; top: 263px; width: 2px; height: 10px; background: repeating-linear-gradient(#c5c5c5 0 2px, transparent 2px 4px); }
.jp-title { margin: 0; height: 43px; padding: 12px 0 0 8px; font-size: 16px; line-height: 20px; font-weight: 400; color: #b5b5b5; font-family: "Noto Sans CJK SC", sans-serif; }
.jp-row { display: flex; align-items: center; height: 24px; }
.jp-row label { flex: none; padding-left: 9px; }
.jp-name label { width: 56px; }
.jp-name .field { width: 1063px; }
.jp-comment { margin-top: 11px; }
.jp-comment label { width: 54px; }
.jp-comment .field { width: 1067px; }
.field { height: 24px; background: #45494a; border: 1px solid #646464; padding: 2px 2px 0; line-height: 22px; }
.jp-legend { display: flex; align-items: center; height: 14px; margin: 6px 0 5px 10px; width: 1109px; gap: 3px; }
.lg-s { width: 3px; height: 1px; background: #55585a; }
.lg-l { flex: 1; height: 1px; background: #55585a; }
.jp-file { position: relative; }
.jp-file .f-label { width: 56px; padding-left: 12px; }
.f-field { width: 664px; flex: none; }
.jbtn { background: #3f4346; border: 1px solid #5e6060; border-radius: 3px; color: #bbb; font-family: "Noto Sans CJK SC", sans-serif; font-size: 12px; line-height: 1; }
.f-browse { width: 54px; height: 21px; margin-left: 9px; font-size: 10px; }
.f-show { margin-left: 6px; width: 96px; white-space: nowrap; }
.f-l { margin-left: 6px; width: 59px; white-space: nowrap; }
.cb { display: block; width: 14px; height: 14px; border: 1px solid #646464; border-radius: 2px; flex: none; background: #3f4346; }
.f-cb1 { margin-left: 0; }
.f-cb2 { margin-left: 12px; }
.f-conf { width: 51px; height: 24px; margin-left: 8px; }
.agg { margin-top: 12px; width: 1131px; height: 337px; border-collapse: collapse; table-layout: fixed; border-bottom: 1px solid #323537; }
.agg th { height: 25px; padding-top: 2px; font-weight: 400; background: #3f4448; border: 1px solid #2f3234; border-width: 1px 1px 2px 1px; color: #aab0b4; text-align: center; white-space: nowrap; }
.agg th:nth-child(n+12) { letter-spacing: -.2px; }
.agg td { height: 20px; padding: 0 5px 0 4px; text-align: right; border: 1px solid #4b4e50; border-top: 0; white-space: nowrap; overflow: hidden; font-size: 11px; }
.agg td:first-child { text-align: left; font-size: 12px; }
.agg-fill td { height: auto; border-bottom: 0; }
.jp-foot { height: 38px; padding-left: 392px; display: flex; align-items: center; }
.jp-foot span { margin-left: 6px; white-space: nowrap; }
.foot-btn { width: 100px; height: 24px; margin-left: 12px; margin-right: 14px; }
.cb-on { display: flex; }
.cb-on svg { width: 12px; height: 12px; }
```
